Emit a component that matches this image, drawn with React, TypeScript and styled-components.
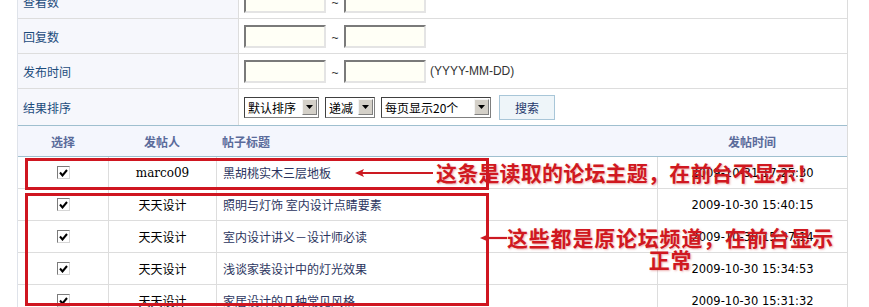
import React from 'react'
import styled, { createGlobalStyle } from 'styled-components'

// ─── Global ───────────────────────────────────────────────────────────────────

const GlobalStyle = createGlobalStyle`
  html, body { margin: 0; padding: 0; background: #fff; overflow: hidden; }
  body { font-family: "Noto Sans CJK SC", "Noto Sans", sans-serif; font-size: 12px; color: #000; }
`

const Page = styled.div`
  position: relative; width: 869px; height: 307px; overflow: hidden;
`

// ─── Search form ──────────────────────────────────────────────────────────────

const FormTable = styled.div`
  margin: -16px 0 0 17px; width: 831px;
  border-left: 1px solid #dfe3ea; border-right: 1px solid #dcdcdc;
  box-sizing: border-box;
`

const FormRow = styled.div<{ $last?: boolean }>`
  display: grid; grid-template-columns: 221px 1fr;
  height: 35px; box-sizing: border-box;
  border-bottom: ${({ $last }) => ($last ? '1px solid #9fbfcf' : '1px solid #dddddd')};
  ${({ $last }) => ($last ? 'height: 37px;' : '')}
`

const Label = styled.div`
  background: #f6f7fc; border-right: 1px solid #dddddd;
  display: flex; align-items: center; padding-left: 5px;
  color: #1d4c7c; font-size: 12px;
`

const Value = styled.div`
  display: flex; align-items: center; padding-left: 5px; gap: 4px;
  color: #333; font-size: 12px;
`

const TextInput = styled.div`
  width: 82px; height: 23px; box-sizing: border-box;
  background: #fffff6;
  border: 2px solid #e4e4e4;
  border-top-color: #7a7a7a; border-left-color: #7a7a7a;
`

const Tilde = styled.span`
  font-family: "Liberation Sans", sans-serif; font-size: 12px; color: #333;
  padding-top: 4px; width: 10px; text-align: center;
`

const Hint = styled.span`
  font-family: "Liberation Sans", sans-serif; font-size: 12px; color: #333;
`

const SelectBox = styled.div<{ $w: number }>`
  width: ${({ $w }) => $w}px; height: 21px; box-sizing: border-box;
  display: flex; align-items: center; justify-content: space-between;
  border: 1px solid #7f7f7f; border-top-color: #404040; border-left-color: #404040;
  background: #fff; padding: 0 1px 0 3px; margin-right: 2px;
  font-size: 12px; color: #000;
`

const ArrowBtn = styled.span`
  width: 15px; height: 16px; box-sizing: border-box;
  background: #d4d0c8;
  border: 1px solid #808080; border-top-color: #f4f4f4; border-left-color: #f4f4f4;
  display: flex; align-items: center; justify-content: center;
`

const SearchBtn = styled.div`
  width: 56px; height: 25px; box-sizing: border-box; margin-left: 2px;
  background: #eef5f9; border: 1px solid #a8c6d8;
  display: flex; align-items: center; justify-content: center;
  color: #26396b; font-size: 12px;
`

// ─── Results table ────────────────────────────────────────────────────────────

const ResultTable = styled.div`
  margin-left: 17px; width: 831px; box-sizing: border-box;
  border-left: 1px solid #dfe3ea; border-right: 1px solid #dcdcdc;
`

const HeadRow = styled.div`
  display: grid; grid-template-columns: 90px 108px 441px 1fr;
  height: 31px; box-sizing: border-box;
  background: #f4f6fd; border-bottom: 1px solid #9fbfcf;
  color: #5a6b9b; font-weight: 700; font-size: 12px;
`

const HeadCell = styled.div<{ $align?: 'left' | 'center' }>`
  display: flex; align-items: center;
  justify-content: ${({ $align }) => ($align === 'left' ? 'flex-start' : 'center')};
  padding-left: ${({ $align }) => ($align === 'left' ? '6px' : '0')};
`

const DataRow = styled.div`
  display: grid; grid-template-columns: 91px 108px 441px 1fr;
  height: 32px; box-sizing: border-box; border-bottom: 1px solid #dddddd;
`

const Cell = styled.div<{ $align?: 'left' | 'center'; $last?: boolean }>`
  display: flex; align-items: center;
  justify-content: ${({ $align }) => ($align === 'left' ? 'flex-start' : 'center')};
  padding-left: ${({ $align }) => ($align === 'left' ? '6px' : '0')};
  border-right: ${({ $last }) => ($last ? 'none' : '1px solid #dddddd')};
  font-size: 12px; color: #000;
`

const Title = styled.span`color: #2b3560;`

const Author = styled.span<{ $serif?: boolean }>`
  font-family: ${({ $serif }) => ($serif ? '"DejaVu Serif", "Liberation Serif", serif' : 'inherit')};
  font-size: 12px;
`

const DateText = styled.span`
  font-family: "DejaVu Sans", Verdana, sans-serif; font-size: 11.5px; color: #000;
`

const Check = styled.span`
  width: 13px; height: 13px; box-sizing: border-box;
  border: 1px solid #d6d6d6; border-top-color: #7b7b7b; border-left-color: #7b7b7b;
  background: #fff; display: flex; align-items: center; justify-content: center;
`

// ─── Annotations (drawn over the table) ───────────────────────────────────────

const RedBox = styled.div<{ $top: number; $h: number }>`
  position: absolute; left: 25px; top: ${({ $top }) => $top}px;
  width: 464px; height: ${({ $h }) => $h}px; box-sizing: border-box;
  border: 3px solid #cf1620; pointer-events: none;
`

const Arrow = styled.svg<{ $left: number; $top: number }>`
  position: absolute; left: ${({ $left }) => $left}px; top: ${({ $top }) => $top}px;
  overflow: visible;
`

const Note = styled.div<{ $left: number; $top: number; $spacing: number }>`
  position: absolute; left: ${({ $left }) => $left}px; top: ${({ $top }) => $top}px;
  font-family: "Noto Sans CJK SC", sans-serif; font-weight: 700;
  font-size: 21px; line-height: 22px; letter-spacing: ${({ $spacing }) => $spacing}px;
  color: #d01820; text-align: center; white-space: nowrap;
  text-shadow: 1px 1px 2px rgba(200, 40, 40, 0.35);
`

// ─── Data ─────────────────────────────────────────────────────────────────────

const rows = [
  { author: 'marco09', serif: true, title: '黑胡桃实木三层地板', time: '2009-10-31 17:25:30' },
  { author: '天天设计', title: '照明与灯饰 室内设计点睛要素', time: '2009-10-30 15:40:15' },
  { author: '天天设计', title: '室内设计讲义－设计师必读', time: '2009-10-30 15:37:14' },
  { author: '天天设计', title: '浅谈家装设计中的灯光效果', time: '2009-10-30 15:34:53' },
  { author: '天天设计', title: '家居设计的几种常见风格', time: '2009-10-30 15:31:32' },
]

function Select({ w, text }: { w: number; text: string }) {
  return (
    <SelectBox $w={w}>
      <span>{text}</span>
      <ArrowBtn>
        <svg width="7" height="4" viewBox="0 0 7 4"><path d="M0 0H7L3.5 4Z" fill="#000" /></svg>
      </ArrowBtn>
    </SelectBox>
  )
}

function ArrowLeft({ left, top, len }: { left: number; top: number; len: number }) {
  return (
    <Arrow $left={left} $top={top} width={len} height="10" viewBox={`0 0 ${len} 10`}>
      <line x1="4" y1="5" x2={len} y2="5" stroke="#cc1a22" strokeWidth="2.2" />
      <path d="M0 5L9 1L7 5L9 9Z" fill="#cc1a22" />
    </Arrow>
  )
}

export default function App() {
  return (
    <Page>
      <GlobalStyle />
      <FormTable>
        <FormRow>
          <Label>查看数</Label>
          <Value><TextInput /><Tilde>~</Tilde><TextInput /></Value>
        </FormRow>
        <FormRow>
          <Label>回复数</Label>
          <Value><TextInput /><Tilde>~</Tilde><TextInput /></Value>
        </FormRow>
        <FormRow>
          <Label>发布时间</Label>
          <Value><TextInput /><Tilde>~</Tilde><TextInput /><Hint>(YYYY-MM-DD)</Hint></Value>
        </FormRow>
        <FormRow $last>
          <Label>结果排序</Label>
          <Value>
            <Select w={75} text="默认排序" />
            <Select w={50} text="递减" />
            <Select w={110} text="每页显示20个" />
            <SearchBtn>搜索</SearchBtn>
          </Value>
        </FormRow>
      </FormTable>

      <ResultTable>
        <HeadRow>
          <HeadCell>选择</HeadCell>
          <HeadCell>发帖人</HeadCell>
          <HeadCell $align="left">帖子标题</HeadCell>
          <HeadCell>发帖时间</HeadCell>
        </HeadRow>
        {rows.map((r, i) => (
          <DataRow key={i}>
            <Cell>
              <Check>
                <svg width="9" height="8" viewBox="0 0 9 8">
                  <path d="M1 3.5L3.5 6.5L8 1" stroke="#000" strokeWidth="2" fill="none" />
                </svg>
              </Check>
            </Cell>
            <Cell><Author $serif={r.serif}>{r.author}</Author></Cell>
            <Cell $align="left"><Title>{r.title}</Title></Cell>
            <Cell $last><DateText>{r.time}</DateText></Cell>
          </DataRow>
        ))}
      </ResultTable>

      <RedBox $top={158} $h={32} />
      <RedBox $top={193} $h={113} />
      <ArrowLeft left={355} top={168} len={78} />
      <ArrowLeft left={480} top={233} len={27} />
      <Note $left={436} $top={161} $spacing={0.2}>这条是读取的论坛主题，在前台不显示！</Note>
      <Note $left={507} $top={226} $spacing={0.8}>这些都是原论坛频道，在前台显示<br />正常</Note>
    </Page>
  )
}
